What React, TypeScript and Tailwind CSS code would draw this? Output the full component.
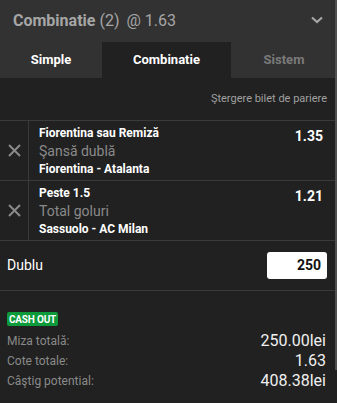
const selections = [
    { pick: "Fiorentina sau Remiză", market: "Şansă dublă", match: "Fiorentina - Atalanta", odds: "1.35" },
    { pick: "Peste 1.5", market: "Total goluri", match: "Sassuolo - AC Milan", odds: "1.21" },
]

const totals = [
    { label: "Miza totală:", value: "250.00lei" },
    { label: "Cote totale:", value: "1.63" },
    { label: "Câştig potential:", value: "408.38lei" },
]

const CloseIcon = () => (
    <svg width="13" height="13" viewBox="0 0 13 13" fill="none">
        <path d="M1 1L12 12M12 1L1 12" stroke="#8a8a8a" strokeWidth="2" />
    </svg>
)

export default function App() {
    return (
        <div className="relative w-[337px] h-[403px] overflow-hidden bg-[#212121] font-['Roboto',sans-serif]">
            <div className="h-[42px] flex items-center justify-between pl-[13px] pr-[14px] bg-[#323232] text-[16px] text-[#a6a6a6]">
                <div className="flex items-center">
                    <span className="font-bold">Combinatie</span>
                    <span className="ml-[4px]">(2)</span>
                    <span className="ml-[7px]">@ 1.63</span>
                </div>
                <svg width="12" height="8" viewBox="0 0 12 8" fill="none" className="mb-[2px]">
                    <path d="M1 1.5L6 6L11 1.5" stroke="#a6a6a6" strokeWidth="2.2" />
                </svg>
            </div>

            <div className="h-[36px] flex bg-[#323232] text-[13px] font-bold">
                <div className="w-[102px] flex items-center justify-center text-white">Simple</div>
                <div className="w-[129px] flex items-center justify-center bg-[#212121] text-white">Combinatie</div>
                <div className="flex-1 flex items-center justify-center text-[#7a7a7a]">Sistem</div>
            </div>

            <div className="h-[43px] flex items-center justify-end pr-[10px] text-[11px] text-[#a0a0a0] border-b border-[#3a3a3a]">
                Ştergere bilet de pariere
            </div>

            {selections.map(s => (
                <div key={s.pick} className="h-[60px] flex border-b border-[#3a3a3a]">
                    <div className="w-[29px] flex items-center justify-center border-r border-[#3a3a3a]">
                        <CloseIcon />
                    </div>
                    <div className="flex-1 flex justify-between pl-[10px] pr-[14px] pt-[4px]">
                        <div className="flex flex-col">
                            <span className="h-[17px] leading-[17px] text-[12px] font-bold text-white">{s.pick}</span>
                            <span className="h-[19px] leading-[19px] text-[14px] text-[#8a8a8a]">{s.market}</span>
                            <span className="h-[16px] leading-[16px] text-[12px] font-bold text-white">{s.match}</span>
                        </div>
                        <span className="mt-[2px] h-[18px] leading-[18px] text-[14px] font-bold text-white">{s.odds}</span>
                    </div>
                </div>
            ))}

            <div className="h-[50px] flex items-center justify-between pl-[7px] pr-[10px] border-b border-[#3a3a3a]">
                <span className="text-[14px] text-white">Dublu</span>
                <div className="w-[60px] h-[27px] flex items-center justify-end pr-[6px] bg-white rounded-[3px] text-[14px] font-bold text-[#111]">
                    250
                </div>
            </div>

            <div className="pl-[7px] pr-[11px] pt-[21px]">
                <div className="w-fit h-[14px] flex items-center px-[2px] bg-[#0c9a3b] rounded-[2px] whitespace-nowrap text-[10px] font-bold tracking-[-0.2px] text-white">
                    CASH OUT
                </div>
                <div className="mt-[5px] flex flex-col">
                    {totals.map(t => (
                        <div key={t.label} className="h-[20px] flex items-center justify-between">
                            <span className="text-[12px] text-[#8a8a8a]">{t.label}</span>
                            <span className="text-[16px] text-[#f0f0f0]">{t.value}</span>
                        </div>
                    ))}
                </div>
            </div>

            <div className="absolute right-0 top-0 w-[2px] h-[370px] bg-[#505050]" />
        </div>
    )
}
